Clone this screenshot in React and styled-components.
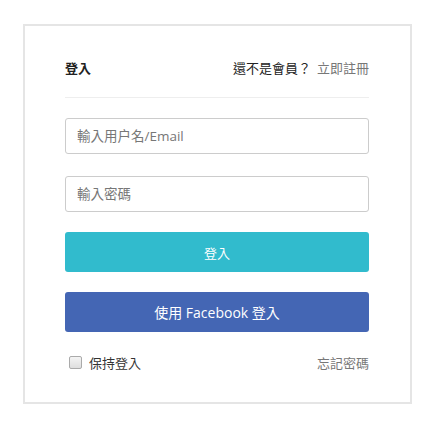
import React, { useState } from "react";
import styled, { createGlobalStyle } from "styled-components";

const GlobalStyle = createGlobalStyle`
  body {
    margin: 0;
    background: #fff;
    font-family: "Open Sans", "Noto Sans CJK TC", sans-serif;
  }
  * { box-sizing: border-box; }
`;

const Page = styled.div`
  padding: 24px 23px;
`;

const Card = styled.div`
  width: 389px;
  height: 380px;
  border: 2px solid #e5e5e5;
  padding: 32px 41px 0 40px;
  display: flex;
  flex-direction: column;
`;

const Header = styled.div`
  display: flex;
  justify-content: space-between;
  align-items: center;
  line-height: 20px;
  padding-bottom: 19px;
  border-bottom: 1px solid #eeeeee;
  font-size: 13px;
  color: #222;
`;

const Title = styled.div`
  font-weight: bold;
`;

const Register = styled.div`
  a {
    color: #777;
    text-decoration: none;
    margin-left: 6px;
  }
`;

const Input = styled.input`
  width: 100%;
  height: 36px;
  margin-top: ${(p) => p.$gap}px;
  border: 1px solid #cccccc;
  border-radius: 3px;
  padding: 0 11px;
  font-family: inherit;
  font-size: 13.5px;
  color: #333;
  outline: none;
  &::placeholder {
    color: #777;
  }
`;

const Button = styled.button`
  width: 100%;
  height: 40px;
  margin-top: 20px;
  border: none;
  border-radius: 3px;
  background: ${(p) => p.$bg};
  color: #fff;
  font-family: inherit;
  font-size: ${(p) => p.$size}px;
  cursor: pointer;
`;

const Footer = styled.div`
  display: flex;
  justify-content: space-between;
  align-items: center;
  margin-top: 20px;
  height: 20px;
  font-size: 13px;
  padding-left: 4px;
`;

const Remember = styled.label`
  display: flex;
  align-items: center;
  color: #333;
  gap: 7px;
`;

const Box = styled.span`
  width: 13px;
  height: 13px;
  border: 1px solid #aaa;
  border-radius: 2px;
  background: linear-gradient(#f4f4f4, #dedede);
`;

const Forgot = styled.a`
  color: #777;
  text-decoration: none;
`;

export default function App() {
  const [user, setUser] = useState("");
  const [pass, setPass] = useState("");
  return (
    <Page>
      <GlobalStyle />
      <Card>
        <Header>
          <Title>登入</Title>
          <Register>
            還不是會員？<a href="#">立即註冊</a>
          </Register>
        </Header>
        <Input
          $gap={20}
          placeholder="輸入用户名/Email"
          value={user}
          onChange={(e) => setUser(e.target.value)}
        />
        <Input
          $gap={22}
          type="password"
          placeholder="輸入密碼"
          value={pass}
          onChange={(e) => setPass(e.target.value)}
        />
        <Button $bg="#31bbcd" $size={13}>登入</Button>
        <Button $bg="#4466b4" $size={14}>使用 Facebook 登入</Button>
        <Footer>
          <Remember>
            <Box />
            保持登入
          </Remember>
          <Forgot href="#">忘記密碼</Forgot>
        </Footer>
      </Card>
    </Page>
  );
}
